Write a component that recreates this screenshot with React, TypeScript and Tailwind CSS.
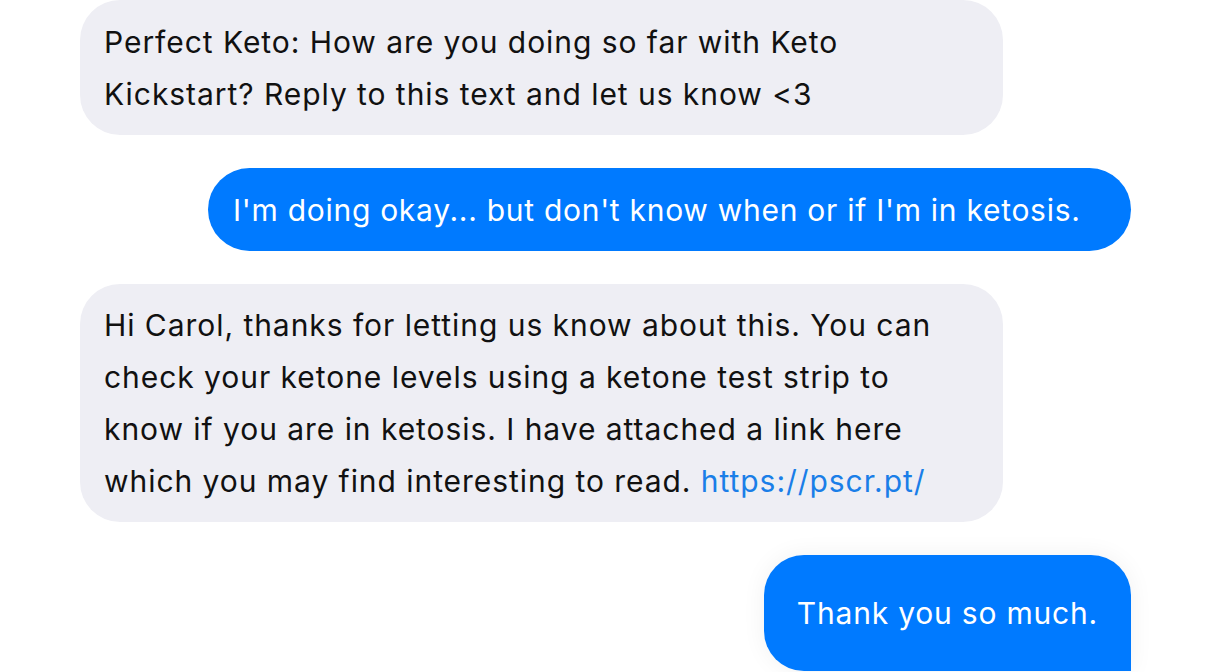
export default function App() {
  const font = { fontFamily: "Inter, 'Noto Sans', sans-serif" };

  return (
    <div
      className="w-[1212px] h-[672px] overflow-hidden bg-white flex flex-col gap-[33px] pl-[80px] pr-[81px]"
      style={font}
    >
      {/* incoming */}
      <div className="self-start w-[923px] rounded-[40px] bg-[#eeeef4] pl-[24px] pr-[40px] pt-[16px] pb-[15px] text-[30px] tracking-[0.95px] leading-[52px] text-[#111111]">
        Perfect Keto: How are you doing so far with Keto Kickstart? Reply to this text and let us know &lt;3
      </div>

      {/* outgoing */}
      <div className="self-end w-[923px] rounded-[42px] bg-[#007aff] pl-[25px] pr-[24px] pt-[16px] pb-[15px] text-[30px] tracking-[0.72px] leading-[52px] text-white">
        I'm doing okay... but don't know when or if I'm in ketosis.
      </div>

      {/* incoming */}
      <div className="self-start w-[923px] rounded-[40px] bg-[#eeeef4] pl-[24px] pr-[40px] py-[15px] text-[30px] tracking-[0.95px] leading-[52px] text-[#111111]">
        Hi Carol, thanks for letting us know about this. You can check your ketone levels using a ketone test strip to know
        if you are in ketosis. I have attached a link here which you may find interesting to read.{" "}
        <span className="text-[#1a7ee8]">https://pscr.pt/</span>
      </div>

      {/* outgoing */}
      <div className="self-end shrink-0 rounded-[40px] rounded-br-none bg-[#007aff] px-[33px] py-[32px] text-[30px] tracking-[0.8px] leading-[52px] text-white shadow-[0_0_24px_rgba(0,0,0,0.06)]">
        Thank you so much.
      </div>
    </div>
  );
}
